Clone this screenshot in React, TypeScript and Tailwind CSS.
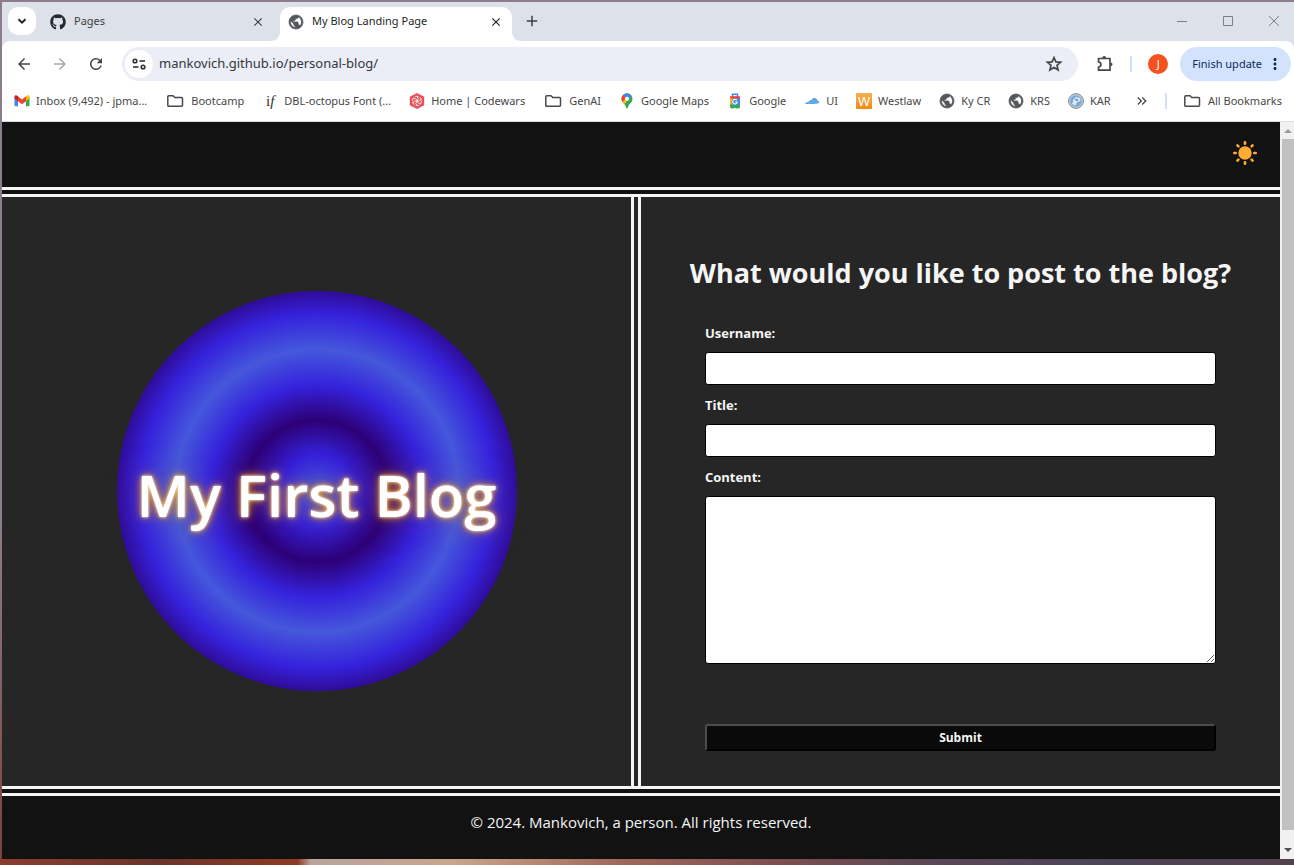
import React, { useState } from "react";
import { FaGithub } from "react-icons/fa";
import {
  MdArrowBack,
  MdArrowForward,
  MdClose,
  MdAdd,
  MdRefresh,
  MdMoreVert,
  MdKeyboardDoubleArrowRight,
} from "react-icons/md";

function Globe() {
  return (
    <svg viewBox="0.5 0.5 23 23" className="size-4 shrink-0" fill="#54575b" stroke="#54575b" strokeWidth="1.1" aria-hidden="true">
      <path d="M12 2C6.48 2 2 6.48 2 12s4.48 10 10 10 10-4.480 10-10S17.520 2 12 2zm-1 17.930c-3.950-.49-7-3.850-7-7.930 0-.62.08-1.210.21-1.790L9 15v1c0 1.100.9 2 2 2v1.930zm6.900-2.540c-.26-.81-1-1.390-1.900-1.390h-1v-3c0-.55-.45-1-1-1H8v-2h2c.55 0 1-.45 1-1V7h2c1.100 0 2-.9 2-2v-.41c2.930 1.190 5 4.060 5 7.410 0 2.080-.8 3.970-2.100 5.390z" />
    </svg>
  );
}

function Folder() {
  return (
    <svg viewBox="0 0 18 16" className="ml-[2px] h-4 w-[18px] shrink-0" fill="none" stroke="#474a4d" strokeWidth="1.5" strokeLinejoin="round" aria-hidden="true">
      <path d="M1.7 2.700 H6 L7.800 4.500 H14.600 Q15.500 4.500 15.500 5.500 V12.200 Q15.500 13.200 14.600 13.200 H1.700 Q.8 13.200 .8 12.200 V3.700 Q.8 2.700 1.700 2.700Z" />
    </svg>
  );
}

function Gmail() {
  return (
    <svg viewBox="0 0 16 12" className="h-3 w-4 shrink-0" aria-hidden="true">
      <path d="M0.5 2 V10.3 Q.5 11.3 1.5 11.3 H4 V5Z" fill="#4285f4" />
      <path d="M15.5 2 V10.3 Q15.5 11.3 14.5 11.3 H12 V5Z" fill="#34a853" />
      <path d="M12 1.3 L13.2 .6 C14.3 -.1 15.5 .6 15.5 1.9 V3.6 L12 6.2Z" fill="#fbbc04" />
      <path d="M4 1.3 L2.8 .6 C1.7 -.1 .5 .6 .5 1.9 V3.6 L4 6.2Z" fill="#c5221f" />
      <path d="M4 1.3 L8 4.4 L12 1.3 V6.2 L8 9.2 L4 6.2Z" fill="#ea4335" />
    </svg>
  );
}

function Codewars() {
  return (
    <svg viewBox="0 0 16 16" className="size-4 shrink-0" aria-hidden="true">
      <path d="M8 0 L15.2 3.8 V12.2 L8 16 L.8 12.2 V3.8Z" fill="#e5535a" />
      <g fill="none" stroke="#fff" strokeWidth=".8">
        <circle cx="8" cy="8" r="4.6" strokeDasharray="3.6 1.2" />
        <path d="M8 3.6 Q10.5 5.6 8 8 Q5.5 10.4 8 12.4 M4.2 5.8 Q7.2 4.8 8 8 Q8.8 11.2 11.8 10.2 M4.2 10.2 Q4.8 7 8 8 Q11.2 9 11.8 5.8" />
      </g>
    </svg>
  );
}

function MapPin() {
  return (
    <svg viewBox="0 0 16 16" className="size-4 shrink-0" aria-hidden="true">
      <defs>
        <clipPath id="pin">
          <path d="M8 .3 A5.5 5.5 0 0 1 13.5 5.8 C13.5 9.6 9.8 10.6 8.9 14.6 Q8 16.6 7.1 14.6 C6.2 10.6 2.5 9.6 2.5 5.8 A5.5 5.5 0 0 1 8 .3Z" />
        </clipPath>
      </defs>
      <g clipPath="url(#pin)">
        <rect width="16" height="16" fill="#34a853" />
        <path d="M0 11.5 L8 5.8 L14 0 V-2 H0Z" fill="#fbbc04" />
        <path d="M3.4 2.4 L5 0 H14 L13.2 3 L8 5.8Z" fill="#4285f4" />
        <path d="M2 7.7 L8 5.8 L7 9.8 L4.6 11.2Z" fill="#fbbc04" />
        <path d="M2 2 H3.7 L7.2 5 L4 8.4 L1 8Z" fill="#ea4335" />
      </g>
      <circle cx="8" cy="5.8" r="2.1" fill="#fff" />
    </svg>
  );
}

function GoogleTag() {
  return (
    <svg viewBox="0 0 16 16" className="size-4 shrink-0" aria-hidden="true">
      <path d="M5.5 4 V1.2 H10.5 V4" fill="none" stroke="#4285f4" strokeWidth="1.6" />
      <path d="M3.2 3.2 H12.8 V6 H3.2Z" fill="#ea4335" />
      <path d="M3 5.5 H8 V12 H3Z" fill="#fbbc04" />
      <path d="M8 5.5 H13 V12 H8Z" fill="#4285f4" />
      <path d="M3 11.5 H13 V14 L12 15.6 H9.5 L8 14.8 L6.5 15.6 H4 L3 14Z" fill="#34a853" />
      <circle cx="8" cy="8.8" r="3.4" fill="#4285f4" />
      <path d="M9.9 7.3 A2.3 2.3 0 1 0 10.3 9 H8.2" fill="none" stroke="#fff" strokeWidth="1.1" />
    </svg>
  );
}

function Cloud() {
  return (
    <svg viewBox="0 0 16 16" className="size-4 shrink-0" aria-hidden="true">
      <path d="M.5 11 Q2.5 8.4 5 8.4 Q5.8 6.6 7.6 7 Q9.2 3.8 12 5.4 Q13.4 6 13.2 7.6 Q15.2 7.8 15.4 9.4 Q14.8 10.6 10 10.9Z" fill="#62a9e2" />
    </svg>
  );
}

function Seal() {
  return (
    <svg viewBox="0 0 16 16" className="size-4 shrink-0" aria-hidden="true">
      <circle cx="8" cy="8" r="7.5" fill="#b5c4ca" stroke="#7e95a4" strokeWidth=".9" />
      <circle cx="8" cy="8" r="5.6" fill="#79a9da" />
      <path d="M4 11 Q5.5 9.5 5 7 L8 4 L12 5 L12.6 8 L9 9.2 L7.5 12.6Z" fill="#dbe9f6" />
      <path d="M7.2 6 L10.5 6.4 L9.8 7.8 L7.6 7.4Z" fill="#4676b4" />
    </svg>
  );
}

const bookmarks: { label: string; icon: React.ReactNode }[] = [
  { label: "Inbox (9,492) - jpma...", icon: <Gmail /> },
  { label: "Bootcamp", icon: <Folder /> },
  {
    label: "DBL-octopus Font (...",
    icon: <span className="w-4 text-center font-['Liberation_Serif',serif] text-[15px] leading-4 text-[#333]" aria-hidden="true">i<i>f</i></span>,
  },
  { label: "Home | Codewars", icon: <Codewars /> },
  { label: "GenAI", icon: <Folder /> },
  { label: "Google Maps", icon: <MapPin /> },
  { label: "Google", icon: <GoogleTag /> },
  { label: "UI", icon: <Cloud /> },
  {
    label: "Westlaw",
    icon: <span className="flex size-4 items-center justify-center bg-linear-to-b from-[#f5b04d] to-[#f08a10] text-[13px] leading-4 text-white" aria-hidden="true">W</span>,
  },
  { label: "Ky CR", icon: <Globe /> },
  { label: "KRS", icon: <Globe /> },
  { label: "KAR", icon: <Seal /> },
];

function TabStrip() {
  return (
    <div className="flex h-[39px] shrink-0 bg-[#dde1e9]">
      <div className="flex flex-1 items-start">
        <button aria-label="Search tabs" className="mt-[5px] ml-[6px] flex size-7 items-center justify-center rounded-[10px] bg-white">
          <svg viewBox="0 0 10 10" className="size-[10px]" fill="none" stroke="#222" strokeWidth="1.9" aria-hidden="true">
            <path d="M1.5 3.2 L5 6.6 L8.5 3.2" />
          </svg>
        </button>
        <div className="flex h-[39px] w-[244px] items-center gap-2 pr-[15px] pl-[14px] text-[11px] text-[#3c4043]">
          <FaGithub className="size-4 text-[#24292f]" />
          <span className="flex-1">Pages</span>
          <button aria-label="Close Pages"><MdClose className="size-[14px]" /></button>
        </div>
        <div className="relative mt-[5px] flex h-[34px] w-[232px] items-center gap-2 rounded-t-[10px] bg-white pr-[9px] pb-[5px] pl-[8px] text-[11px] text-[#1f1f1f]">
          <svg viewBox="0 0 10 10" className="absolute bottom-0 -left-[10px] size-[10px]" aria-hidden="true"><path d="M10 0 V10 H0 Q10 10 10 0Z" fill="#fff" /></svg>
          <svg viewBox="0 0 10 10" className="absolute -right-[10px] bottom-0 size-[10px]" aria-hidden="true"><path d="M0 0 V10 H10 Q0 10 0 0Z" fill="#fff" /></svg>
          <Globe />
          <span className="flex-1">My Blog Landing Page</span>
          <button aria-label="Close My Blog Landing Page"><MdClose className="size-[14px]" /></button>
        </div>
        <button aria-label="New tab" className="mt-[10px] ml-[11px]"><MdAdd className="size-[18px] text-[#3c4043]" /></button>
      </div>
      <div className="flex h-[38px] items-center text-[#7c8086]">
        {[
          { name: "Minimize", d: "M0 5.5 H10" },
          { name: "Maximize", d: "M.5 .5 H9.5 V9.5 H.5Z" },
          { name: "Close window", d: "M0 0 L10 10 M10 0 L0 10" },
        ].map((c) => (
          <button key={c.name} aria-label={c.name} className="flex w-[46px] justify-center last:mr-[-3px]">
            <svg viewBox="0 0 10 10" className="size-[10px] overflow-visible" fill="none" stroke="currentColor" aria-hidden="true"><path d={c.d} /></svg>
          </button>
        ))}
      </div>
    </div>
  );
}

function Toolbar() {
  return (
    <div className="flex h-[46px] shrink-0 items-center rounded-t-lg bg-white pr-[3px] pl-[13px] text-[#474747]">
      <div className="flex gap-[18px]">
        <button aria-label="Back"><MdArrowBack className="size-[18px]" /></button>
        <button aria-label="Forward"><MdArrowForward className="size-[18px] text-[#a6a8aa]" /></button>
        <button aria-label="Reload"><MdRefresh className="size-[18px]" /></button>
      </div>
      <div className="ml-[17px] flex h-[34px] flex-1 items-center gap-[6px] rounded-full bg-[#ebeef7] pr-[15px] pl-[3px]">
        <button aria-label="Site information" className="flex size-7 items-center justify-center rounded-full bg-white">
          <svg viewBox="0 0 14 12" className="h-3 w-[14px]" fill="none" stroke="#303030" strokeWidth="1.6" aria-hidden="true">
            <circle cx="3" cy="3" r="1.8" /><path d="M7.5 3 H13" />
            <circle cx="11" cy="9" r="1.8" /><path d="M1 9 H6.5" />
          </svg>
        </button>
        <input aria-label="Address" defaultValue="mankovich.github.io/personal-blog/" className="flex-1 bg-transparent text-[13px] text-[#33363a] outline-none" />
        <button aria-label="Bookmark this page">
          <svg viewBox="0 0 18 18" className="size-[18px]" fill="none" stroke="currentColor" strokeWidth="1.7" aria-hidden="true">
            <path d="M9 2.600 L10.900 6.900 L15.600 7.300 L12 10.400 L13.100 15 L9 12.500 L4.900 15 L6 10.400 L2.400 7.300 L7.100 6.900Z" />
          </svg>
        </button>
      </div>
      <button aria-label="Extensions" className="ml-[18px]">
        <svg viewBox="0 0 18 18" className="size-[18px]" fill="none" stroke="currentColor" strokeWidth="1.700" strokeLinejoin="round" aria-hidden="true">
          <path d="M2.500 3.500 H14 V15.200 H2.500 V12 Q4.900 11.600 4.900 9.400 Q4.900 7.200 2.500 6.800Z" />
          <path d="M6.300 3 Q6.300 1 8.200 1 Q10.100 1 10.100 3Z M14.500 7.400 Q16.500 7.400 16.500 9.300 Q16.500 11.200 14.500 11.200Z" fill="currentColor" stroke="none" />
        </svg>
      </button>
      <div className="mx-[16px] h-4 w-[2px] bg-[#d3e1f8]" />
      <button aria-label="Profile" className="flex size-5 items-center justify-center rounded-full bg-[#f4511e] text-[11px] text-white">J</button>
      <button className="ml-3 flex h-[34px] items-center gap-1 rounded-full bg-[#d3e3fd] pr-[7px] pl-3 text-[11px] whitespace-nowrap text-[#0b2a55]">
        Finish update
        <MdMoreVert className="size-[18px]" />
      </button>
    </div>
  );
}

function Bookmarks() {
  return (
    <nav aria-label="Bookmarks" className="flex h-[35px] shrink-0 items-center border-b border-[#dcdde0] bg-white pr-[12px] pb-[6px] pl-[12px] text-[11px] whitespace-nowrap text-[#474747]">
      <div className="flex flex-1 items-center gap-[18px]">
        {bookmarks.map((b) => (
          <a key={b.label} href="#" className="flex items-center gap-[6px]">
            {b.icon}
            {b.label}
          </a>
        ))}
      </div>
      <button aria-label="More bookmarks"><MdKeyboardDoubleArrowRight className="size-4" /></button>
      <div className="mx-[15px] h-4 w-[2px] bg-[#d3e1f8]" />
      <a href="#" className="flex items-center gap-[6px]"><Folder />All Bookmarks</a>
    </nav>
  );
}

function Sun() {
  return (
    <svg viewBox="0 0 24 24" className="size-6" fill="#ffac33" aria-hidden="true">
      <circle cx="12" cy="12" r="6.7" />
      {[0, 45, 90, 135, 180, 225, 270, 315].map((a) => (
        <rect key={a} x="10.7" y="0" width="2.6" height="4" rx="1.3" transform={`rotate(${a} 12 12)`} />
      ))}
    </svg>
  );
}

function BlogPage() {
  const [form, setForm] = useState({ username: "", title: "", content: "" });
  const field = "w-full rounded-[3px] border border-black bg-white px-2 text-sm text-black outline-none";
  return (
    <div className="flex flex-1 flex-col bg-[#262626] font-['Open_Sans','Noto_Sans',sans-serif] text-[#f5f5f5]">
      <header className="flex h-[75px] items-start justify-end border-b-10 border-double border-[#f5f5f5] bg-[#121212] pt-[19px] pr-[23px]">
        <button aria-label="Toggle light mode"><Sun /></button>
      </header>
      <main className="grid flex-1 grid-cols-2">
        <section className="flex items-center justify-center border-r-10 border-double border-[#f5f5f5] pb-[2px]">
          <div className="flex size-[400px] items-center justify-center rounded-full bg-[radial-gradient(circle,#4558db_0%,#3522dc_12.5%,#2d0076_25%,#3522dc_37.5%,#4558db_50%,#3522dc_62.5%,#2d0076_75%)] pt-2">
            <h1 className="text-[58px] font-semibold whitespace-nowrap text-white [text-shadow:0_0_3px_#fff,0_0_7px_#ffa500,0_0_14px_#ffa50066,0_0_40px_#ffa50040]">My First Blog</h1>
          </div>
        </section>
        <section className="flex flex-col items-center pt-[54px]">
          <h2 className="text-[27px] leading-[44px] font-bold whitespace-nowrap">What would you like to post to the blog?</h2>
          <form className="mt-[28px] flex w-4/5 flex-col text-[13px] font-bold" onSubmit={(e) => e.preventDefault()}>
            <label htmlFor="username" className="mb-[9px] leading-5">Username:</label>
            <input id="username" value={form.username} onChange={(e) => setForm({ ...form, username: e.target.value })} className={`${field} h-[33px]`} />
            <label htmlFor="title" className="mt-[10px] mb-[9px] leading-5">Title:</label>
            <input id="title" value={form.title} onChange={(e) => setForm({ ...form, title: e.target.value })} className={`${field} h-[33px]`} />
            <label htmlFor="content" className="mt-[10px] mb-[9px] leading-5">Content:</label>
            <textarea id="content" value={form.content} onChange={(e) => setForm({ ...form, content: e.target.value })} className={`${field} h-[168px] resize py-2`} />
            <button type="submit" className="mt-[60px] h-[27px] rounded-[3px] border-2 border-t-[#4c4c4c] border-r-black border-b-black border-l-[#4c4c4c] bg-[#0a0a0a] text-xs">Submit</button>
          </form>
        </section>
      </main>
      <footer className="h-[73px] border-t-10 border-double border-[#f5f5f5] bg-[#121212] pt-[14px] text-center text-[15px] leading-6">
        © 2024. Mankovich, a person. All rights reserved.
      </footer>
    </div>
  );
}

function Scrollbar() {
  return (
    <div className="flex w-[14px] flex-col items-center bg-[#f1f1f1] pl-[2px]" aria-hidden="true">
      <svg viewBox="0 0 8 4" className="mt-[7px] mb-[6px] h-1 w-2 shrink-0" fill="#9a9a9a"><path d="M0 4 L4 0 L8 4Z" /></svg>
      <div className="w-full flex-1 bg-[#c1c1c1]" />
      <svg viewBox="0 0 8 4" className="mt-[18px] mb-[7px] h-1 w-2 shrink-0" fill="#505050"><path d="M0 0 L4 4 L8 0Z" /></svg>
    </div>
  );
}

export default function App() {
  return (
    <div className="flex min-h-screen flex-col bg-linear-to-b from-[#8b7d8d] from-60% to-[#7b4038] font-['Noto_Sans','Open_Sans',sans-serif]">
      <div className="mt-[2px] ml-[2px] flex flex-1 flex-col bg-[#dde1e9]">
        <TabStrip />
        <Toolbar />
        <Bookmarks />
        <div className="flex flex-1">
          <BlogPage />
          <Scrollbar />
        </div>
      </div>
      <div className="h-[6px] bg-[linear-gradient(90deg,#8a3d30_0%,#6b342b_12%,#8f3a25_23%,#b9a49b_24%,#c9a58c_35%,#a0685a_48%,#7d4f4e_60%,#5a4757_72%,#4c4457_85%,#54414d_100%)]" />
    </div>
  );
}
